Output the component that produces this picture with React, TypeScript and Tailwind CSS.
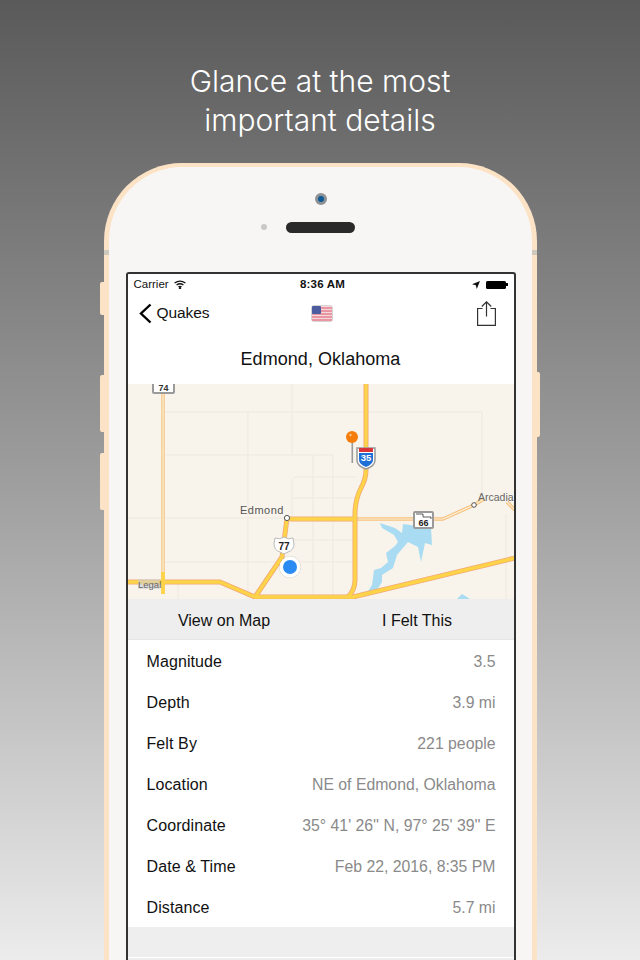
const details = [
  { label: "Magnitude", value: "3.5" },
  { label: "Depth", value: "3.9 mi" },
  { label: "Felt By", value: "221 people" },
  { label: "Location", value: "NE of Edmond, Oklahoma" },
  { label: "Coordinate", value: "35° 41' 26'' N, 97° 25' 39'' E" },
  { label: "Date & Time", value: "Feb 22, 2016, 8:35 PM" },
  { label: "Distance", value: "5.7 mi" },
];

function QuakeMap() {
  return (
    <svg width="386" height="215" viewBox="0 0 386 215" className="block bg-[#f8f4ec]">
      {/* minor streets */}
      <g fill="none" stroke="#efe9df" strokeWidth="1">
        <path d="M35 28H354V115" />
        <path d="M35 71H205" />
        <path d="M0 134H159" />
        <path d="M120 28V215" />
        <path d="M164 0V71" />
        <path d="M185 71V215" />
        <path d="M205 71V215" />
        <path d="M228 114H164V98Q164 93 169 93H228" />
        <path d="M164 156H228" />
        <path d="M35 178H228" />
        <path d="M164 114V134" />
        <path d="M50 200V215" />
        <path d="M378 130V215" />
      </g>
      {/* water */}
      <path
        d="M252 139L267 144L274 149L275 140L303 144L304 161L297 159L293 178L290 163L280 158L269 171L265 184L254 191L254 198L249 206L239 209L244 201L246 186L253 184L260 178L258 169L267 162L270 158L266 151L254 144Z"
        fill="#a9dcf2"
      />
      <path d="M329 215L334 210L342 215Z" fill="#a9dcf2" />
      {/* thin roads */}
      <g fill="none" strokeLinejoin="round">
        <path d="M35 0V205" stroke="#f6c684" strokeWidth="3.5" />
        <path d="M35 0V205" stroke="#fdf0d6" strokeWidth="1.2" />
        <path d="M227 135H315L346 121L356 115M379 118L387 126" stroke="#f6c07c" strokeWidth="3.5" />
        <path d="M227 135H315L346 121L356 115M379 118L387 126" stroke="#fdf3de" strokeWidth="1.2" />
      </g>
      {/* highways */}
      <g fill="none" strokeLinejoin="round">
        <g stroke="#f2a878" strokeWidth="5">
          <path d="M159 135H227" />
          <path d="M0 198H92L127 213H225L387 174" />
          <path d="M127 213L154 173L159 134" />
          <path d="M238 0V86Q238 95 233 104Q227 116 227 130V196Q227 206 220 213" />
        </g>
        <g stroke="#fdd348" strokeWidth="3.4">
          <path d="M159 135H227" />
          <path d="M0 198H92L127 213H225L387 174" />
          <path d="M127 213L154 173L159 134" />
          <path d="M238 0V86Q238 95 233 104Q227 116 227 130V196Q227 206 220 213" />
          <path d="M35 188V210" strokeWidth="3.8" />
        </g>
      </g>
      {/* route 74 */}
      <rect x="25" y="-4" width="21" height="13" rx="1" fill="#fff" stroke="#9a9a9a" strokeWidth="2" />
      <text x="35.5" y="7" textAnchor="middle" fontSize="9" fontWeight="700" fill="#333" fontFamily="Liberation Sans, sans-serif">
        74
      </text>
      {/* edmond */}
      <text x="112" y="130" fontSize="11" letterSpacing="0.5" fill="#555" fontFamily="Liberation Sans, sans-serif">
        Edmond
      </text>
      <circle cx="159" cy="134" r="2.6" fill="#fff" stroke="#555" strokeWidth="1" />
      {/* route 77 */}
      <path
        d="M147 154Q152 156 156 153Q160 156 165 154L166 160Q166 166 160 168L156 170L152 168Q146 166 146 160Z"
        fill="#fff"
        stroke="#bbb"
        strokeWidth="1"
      />
      <text x="156" y="166" textAnchor="middle" fontSize="10" fontWeight="700" fill="#222" fontFamily="Liberation Sans, sans-serif">
        77
      </text>
      {/* user location */}
      <circle cx="162" cy="183" r="11" fill="#000" opacity="0.12" />
      <circle cx="162" cy="183" r="10.5" fill="#fff" />
      <circle cx="162" cy="183" r="7" fill="#2a8cf2" />
      {/* legal */}
      <rect x="10" y="195" width="22" height="10" fill="#cfcfcf" opacity="0.6" />
      <text x="10" y="204" fontSize="9.5" fill="#666" fontFamily="Liberation Sans, sans-serif">
        Legal
      </text>
      {/* interstate 35 */}
      <path d="M229 64H247V76Q247 82 238 85Q229 82 229 76Z" fill="#fff" stroke="#999" strokeWidth="1.5" />
      <path d="M231 64H245V68H231Z" fill="#d8353a" />
      <path d="M231 69H245V76Q245 80 238 83Q231 80 231 76Z" fill="#1e6fd6" />
      <text x="238" y="77" textAnchor="middle" fontSize="9.5" fontWeight="700" fill="#fff" fontFamily="Liberation Sans, sans-serif">
        35
      </text>
      {/* quake pin */}
      <rect x="223.5" y="55" width="1.6" height="24" fill="#9a9a9a" />
      <circle cx="224" cy="53" r="6" fill="#f47d0c" />
      <circle cx="222.5" cy="51" r="1.2" fill="#ffc08a" />
      {/* route 66 */}
      <rect x="286" y="128" width="19" height="16" rx="1" fill="#fff" stroke="#9a9a9a" strokeWidth="2" />
      <path d="M288 130H295V133H303V135" fill="none" stroke="#333" strokeWidth="0.8" />
      <text x="295.5" y="142" textAnchor="middle" fontSize="9" fontWeight="700" fill="#222" fontFamily="Liberation Sans, sans-serif">
        66
      </text>
      {/* arcadia */}
      <circle cx="346" cy="121" r="2.3" fill="#fff" stroke="#555" strokeWidth="1" />
      <text x="350" y="117" fontSize="10.5" fill="#666" fontFamily="Liberation Sans, sans-serif">
        Arcadia
      </text>
    </svg>
  );
}

function Flag() {
  return (
    <svg width="22" height="17" viewBox="0 0 22 17" className="block">
      <rect x="0.5" y="0.5" width="21" height="16" rx="2.5" fill="#f4d9dc" stroke="#d9d4d4" />
      <path d="M1 3H21M1 6H21M1 9H21M1 12H21M1 15H21" stroke="#e6808e" strokeWidth="1.6" />
      <rect x="1" y="1" width="9" height="8" rx="1" fill="#4c5c9e" />
    </svg>
  );
}

function ShareIcon() {
  return (
    <svg width="19" height="25" viewBox="0 0 19 25" fill="none" stroke="#333" strokeWidth="1.2" className="block">
      <path d="M5.5 7.5H0.6V24.4H18.4V7.5H13.5" />
      <path d="M9.5 15.5V0.8M4.8 5.5L9.5 0.8L14.2 5.5" />
    </svg>
  );
}

function StatusBar() {
  return (
    <div className="grid h-[18px] grid-cols-3 items-center pt-[2px] text-[11.5px] text-[#111]">
      <div className="flex items-center gap-[5px] pl-[6px]">
        <span>Carrier</span>
        <svg width="12" height="9" viewBox="0 0 12 9" fill="none" stroke="#111" strokeWidth="1.4">
          <path d="M0.6 3Q6 -0.8 11.4 3" />
          <path d="M2.6 5Q6 2.6 9.4 5" />
          <path d="M4.5 6.9Q6 5.9 7.5 6.9" />
          <circle cx="6" cy="8.2" r="0.5" fill="#111" />
        </svg>
      </div>
      <div className="pl-[4px] text-center font-bold tracking-[0.2px]">8:36 AM</div>
      <div className="flex items-center justify-end gap-[6px] pr-[6px]">
        <svg width="8" height="8" viewBox="0 0 8 8" fill="#111">
          <path d="M8 0L4.8 8L3.8 4.2L0 3.2Z" />
        </svg>
        <div className="flex items-center">
          <div className="h-[8px] w-[20px] rounded-[1.5px] bg-black" />
          <div className="h-[3px] w-[1.5px] bg-black" />
        </div>
      </div>
    </div>
  );
}

function Screen() {
  return (
    <div className="ml-[17px] mt-[39px] w-[390px] rounded-t-[3px] border-x-2 border-t-2 border-[#333] bg-white">
      <StatusBar />
      <div className="grid h-[42px] grid-cols-3 items-center">
        <div className="flex items-center gap-[5px] pl-[11px] text-[15.5px] tracking-[-0.1px] text-[#111]">
          <svg width="13" height="21" viewBox="0 0 13 21" fill="none" stroke="#000" strokeWidth="2.4" className="block">
            <path d="M11.5 1.5L2 10.5L11.5 19.5" />
          </svg>
          <span>Quakes</span>
        </div>
        <div className="flex justify-center pl-[3px]">
          <Flag />
        </div>
        <div className="flex justify-end pr-[18px]">
          <ShareIcon />
        </div>
      </div>
      <div className="flex h-[50px] items-center justify-center text-[18px] tracking-[0.05px] text-[#111]">
        Edmond, Oklahoma
      </div>
      <QuakeMap />
      <div className="grid h-[41px] grid-cols-2 items-center border-b border-[#e6e6e6] bg-[#eeeeee] pt-[4px] text-center text-[16px] text-[#111]">
        <span>View on Map</span>
        <span>I Felt This</span>
      </div>
      <div className="flex flex-col">
        {details.map((row) => (
          <div key={row.label} className="flex h-[41px] items-center justify-between pl-[19px] pr-[18px] pt-[2px] text-[16px]">
            <span className="tracking-[0.1px] text-[#111]">{row.label}</span>
            <span className="text-[15.8px] text-[#8a8a8a]">{row.value}</span>
          </div>
        ))}
      </div>
      <div className="h-[31px] border-b border-white bg-[#eeeeee]" />
      <div className="h-[10px] bg-[#eeeeee]" />
    </div>
  );
}

export default function App() {
  return (
    <div className="flex h-[960px] flex-col items-center overflow-hidden bg-linear-to-b from-[#5a5a5a] via-[#9e9e9e] via-50% to-[#ececec] font-['Liberation_Sans',sans-serif]">
      <h1 className="pt-[62px] text-center font-['Inter',sans-serif] text-[30px] font-light leading-[39px] text-white">
        Glance at the most
        <br />
        important details
      </h1>

      <div className="relative mt-[23px] w-[433px] shrink-0">
        {/* side buttons */}
        <div className="absolute -left-[4px] top-[119px] h-[33px] w-[4px] rounded-l-[2px] bg-[#fde3c5]" />
        <div className="absolute -left-[4px] top-[212px] h-[57px] w-[4px] rounded-l-[2px] bg-[#fde3c5]" />
        <div className="absolute -left-[4px] top-[290px] h-[57px] w-[4px] rounded-l-[2px] bg-[#fde3c5]" />
        <div className="absolute -right-[3px] top-[209px] h-[65px] w-[3px] rounded-r-[2px] bg-[#fde3c5]" />
        {/* antenna bands */}
        <div className="absolute left-0 top-[87px] h-[5px] w-[5px] bg-[#cfc8bd]" />
        <div className="absolute right-0 top-[87px] h-[5px] w-[5px] bg-[#cfc8bd]" />

        <div className="h-[800px] rounded-t-[78px] border-x-[5px] border-t-[4px] border-[#fde3c5] bg-[#f7f6f4]">
          <div className="flex flex-col items-center pt-[26px]">
            <div className="ml-[2px] h-[12px] w-[12px] rounded-full border-[3px] border-[#8f9294] bg-[#0d5a96]" />
            <div className="relative mt-[17px] h-[11px] w-[69px] rounded-full bg-[#2a2a2a]">
              <div className="absolute -left-[25px] top-[2px] h-[6px] w-[6px] rounded-full bg-[#c9c9c9]" />
            </div>
          </div>
          <Screen />
        </div>
      </div>
    </div>
  );
}
